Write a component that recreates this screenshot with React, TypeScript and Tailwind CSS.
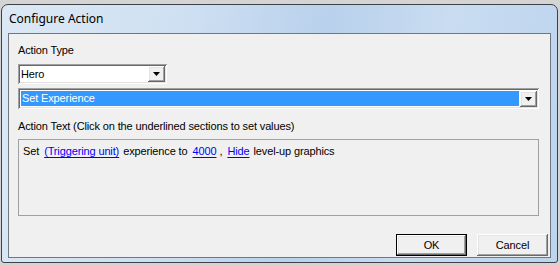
import React from "react";

const sunken =
  "shadow-[inset_1px_1px_0_#a0a0a0,inset_-1px_-1px_0_#ffffff,inset_2px_2px_0_#696969,inset_-2px_-2px_0_#e3e3e3]";
const raised =
  "shadow-[inset_-1px_-1px_0_#696969,inset_1px_1px_0_#ffffff,inset_-2px_-2px_0_#a0a0a0,inset_2px_2px_0_#e3e3e3]";

function Arrow() {
  return (
    <svg width="7" height="4" viewBox="0 0 7 4">
      <path d="M0 0h7L3.5 4z" fill="#000" />
    </svg>
  );
}

function DropButton() {
  return (
    <div className={`w-[17px] h-[16px] bg-[#f0f0f0] flex items-center justify-center ${raised}`}>
      <Arrow />
    </div>
  );
}

function Link({ children, className = "" }: { children: React.ReactNode; className?: string }) {
  return <span className={`text-[#0000ff] underline underline-offset-2 ${className}`}>{children}</span>;
}

export default function App() {
  return (
    <div
      className="w-[560px] h-[266px] bg-[#d4d4d4] overflow-hidden pl-[1px] pt-[4px]"
      style={{ fontFamily: '"Liberation Sans", Arial, sans-serif' }}
    >
      <div className="w-[557px] h-[259px] rounded-t-[7px] rounded-b-[3px] border border-[#3e4247] bg-[linear-gradient(100deg,#dce8f5_0%,#cfe0f2_30%,#b9d1ec_55%,#c9dcf1_75%,#bcd4ee_100%)] flex flex-col px-[6px] pb-[4px]">
        <div className="h-[28px] flex items-center pl-[1px] text-[12px] text-black" style={{ fontFamily: '"Noto Sans", "Liberation Sans", sans-serif' }}>
          Configure Action
        </div>
        <div className="flex-1 border border-[#6f7781] bg-[#f0f0f0] flex flex-col pl-[9px] pt-[10px] text-[11px] leading-[13px] tracking-[-0.13px] text-black">
          <div>Action Type</div>

          <div className={`mt-[7px] w-[149px] h-[20px] bg-white flex items-center p-[2px] ${sunken}`}>
            <div className="flex-1 pl-[1px]">Hero</div>
            <DropButton />
          </div>

          <div className={`mt-[4px] w-[521px] h-[21px] bg-white flex items-center p-[2px] ${sunken}`}>
            <div className="flex-1 h-full p-[1px]">
              <div className="h-full bg-[#3399ff] text-white flex items-center pl-[1px]">Set Experience</div>
            </div>
            <DropButton />
          </div>

          <div className="mt-[11px]">Action Text (Click on the underlined sections to set values)</div>

          <div className="mt-[6px] w-[521px] h-[77px] border border-[#a0a0a0] pl-[4px] pt-[5px]">
            <div className="flex items-baseline whitespace-pre">
              <span>Set</span>
              <Link className="ml-[5px]">(Triggering unit)</Link>
              <span className="ml-[4px]">experience to</span>
              <Link className="ml-[5px]">4000</Link>
              <span className="ml-[3px]">,</span>
              <Link className="ml-[5px]">Hide</Link>
              <span className="ml-[4px]">level-up graphics</span>
            </div>
          </div>

          <div className="mt-auto mb-[1px] flex justify-end gap-[10px] pr-[2px]">
            <div className={`w-[71px] h-[22px] bg-[#f0f0f0] border border-black flex items-center justify-center ${raised}`}>
              OK
            </div>
            <div className={`w-[71px] h-[22px] bg-[#f0f0f0] flex items-center justify-center ${raised}`}>
              Cancel
            </div>
          </div>
        </div>
      </div>
    </div>
  );
}
